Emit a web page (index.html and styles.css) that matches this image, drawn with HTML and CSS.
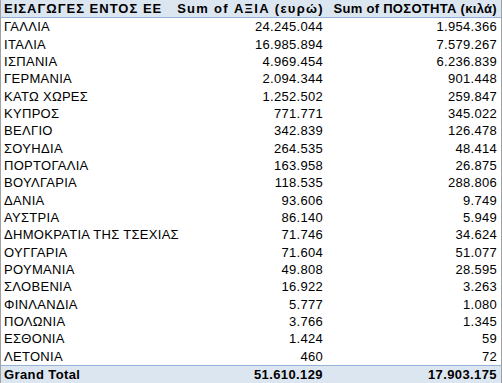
FILE: index.html
```html
<!DOCTYPE html>
<html lang="el">
<head>
<meta charset="utf-8">
<link rel="stylesheet" href="styles.css">
</head>
<body>
<div class="pivot">
  <div class="cell head label title">ΕΙΣΑΓΩΓΕΣ ΕΝΤΟΣ ΕΕ</div>
  <div class="cell head num value-head">Sum of ΑΞΙΑ (ευρώ)</div>
  <div class="cell head num">Sum of ΠΟΣΟΤΗΤΑ (κιλά)</div>

  <div class="cell label">ΓΑΛΛΙΑ</div><div class="cell num">24.245.044</div><div class="cell num">1.954.366</div>
  <div class="cell label">ΙΤΑΛΙΑ</div><div class="cell num">16.985.894</div><div class="cell num">7.579.267</div>
  <div class="cell label">ΙΣΠΑΝΙΑ</div><div class="cell num">4.969.454</div><div class="cell num">6.236.839</div>
  <div class="cell label">ΓΕΡΜΑΝΙΑ</div><div class="cell num">2.094.344</div><div class="cell num">901.448</div>
  <div class="cell label">ΚΑΤΩ ΧΩΡΕΣ</div><div class="cell num">1.252.502</div><div class="cell num">259.847</div>
  <div class="cell label">ΚΥΠΡΟΣ</div><div class="cell num">771.771</div><div class="cell num">345.022</div>
  <div class="cell label">ΒΕΛΓΙΟ</div><div class="cell num">342.839</div><div class="cell num">126.478</div>
  <div class="cell label">ΣΟΥΗΔΙΑ</div><div class="cell num">264.535</div><div class="cell num">48.414</div>
  <div class="cell label">ΠΟΡΤΟΓΑΛΙΑ</div><div class="cell num">163.958</div><div class="cell num">26.875</div>
  <div class="cell label">ΒΟΥΛΓΑΡΙΑ</div><div class="cell num">118.535</div><div class="cell num">288.806</div>
  <div class="cell label">ΔΑΝΙΑ</div><div class="cell num">93.606</div><div class="cell num">9.749</div>
  <div class="cell label">ΑΥΣΤΡΙΑ</div><div class="cell num">86.140</div><div class="cell num">5.949</div>
  <div class="cell label">ΔΗΜΟΚΡΑΤΙΑ ΤΗΣ ΤΣΕΧΙΑΣ</div><div class="cell num">71.746</div><div class="cell num">34.624</div>
  <div class="cell label">ΟΥΓΓΑΡΙΑ</div><div class="cell num">71.604</div><div class="cell num">51.077</div>
  <div class="cell label">ΡΟΥΜΑΝΙΑ</div><div class="cell num">49.808</div><div class="cell num">28.595</div>
  <div class="cell label">ΣΛΟΒΕΝΙΑ</div><div class="cell num">16.922</div><div class="cell num">3.263</div>
  <div class="cell label">ΦΙΝΛΑΝΔΙΑ</div><div class="cell num">5.777</div><div class="cell num">1.080</div>
  <div class="cell label">ΠΟΛΩΝΙΑ</div><div class="cell num">3.766</div><div class="cell num">1.345</div>
  <div class="cell label">ΕΣΘΟΝΙΑ</div><div class="cell num">1.424</div><div class="cell num">59</div>
  <div class="cell label">ΛΕΤΟΝΙΑ</div><div class="cell num">460</div><div class="cell num">72</div>

  <div class="cell total label">Grand Total</div>
  <div class="cell total num">51.610.129</div>
  <div class="cell total num">17.903.175</div>
</div>
</body>
</html>
```
FILE: styles.css
```css
html, body {
  margin: 0;
  padding: 0;
  background: #ffffff;
}

.pivot {
  box-sizing: border-box;
  width: 502px;
  height: 383px;
  display: grid;
  grid-template-columns: 190px 136px 1fr;
  grid-template-rows: 18px repeat(20, 1fr) 18px;
  border-left: 1px solid #a0a0a0;
  border-right: 1px solid #a0a0a0;
  font-family: "Liberation Sans", Arial, sans-serif;
  font-size: 13px;
  color: #000000;
}

.cell {
  display: flex;
  align-items: center;
  white-space: nowrap;
  padding: 0 4px 0 3px;
  letter-spacing: 0.3px;
}

.num {
  justify-content: flex-end;
}

.head {
  background: #dce6f1;
  font-weight: bold;
  border-bottom: 1px solid #95b3d7;
  letter-spacing: 0.3px;
}

.title {
  letter-spacing: 1px;
}

.value-head {
  letter-spacing: 1.3px;
  padding-right: 3px;
}

.total {
  background: #dce6f1;
  font-weight: bold;
  border-top: 1px solid #95b3d7;
  letter-spacing: 0.4px;
}
```
